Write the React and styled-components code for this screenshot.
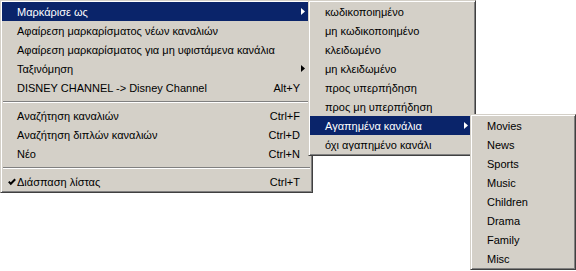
import styled, { createGlobalStyle } from 'styled-components';

const GlobalStyle = createGlobalStyle`
	html, body {
		margin: 0;
		padding: 0;
		background: #ffffff;
	}
	body {
		font-family: 'Liberation Sans', Arial, sans-serif;
		font-size: 11px;
	}
`;

const mainItems = [
	{ label: 'Μαρκάρισε ως', submenu: true, active: true },
	{ label: 'Αφαίρεση μαρκαρίσματος νέων καναλιών' },
	{ label: 'Αφαίρεση μαρκαρίσματος για μη υφιστάμενα κανάλια' },
	{ label: 'Ταξινόμηση', submenu: true },
	{ label: 'DISNEY CHANNEL -> Disney Channel', shortcut: 'Alt+Y' },
	{ separator: true },
	{ label: 'Αναζήτηση καναλιών', shortcut: 'Ctrl+F' },
	{ label: 'Αναζήτηση διπλών καναλιών', shortcut: 'Ctrl+D' },
	{ label: 'Νέο', shortcut: 'Ctrl+N' },
	{ separator: true },
	{ label: 'Διάσπαση λίστας', shortcut: 'Ctrl+T', checked: true },
];

const markItems = [
	{ label: 'κωδικοποιημένο' },
	{ label: 'μη κωδικοποιημένο' },
	{ label: 'κλειδωμένο' },
	{ label: 'μη κλειδωμένο' },
	{ label: 'προς υπερπήδηση' },
	{ label: 'προς μη υπερπήδηση' },
	{ label: 'Αγαπημένα κανάλια', submenu: true, active: true },
	{ label: 'όχι αγαπημένο κανάλι' },
];

const favItems = ['Movies', 'News', 'Sports', 'Music', 'Children', 'Drama', 'Family', 'Misc'].map(
	(label) => ({ label })
);

function Arrow() {
	return (
		<ArrowIcon width="4" height="7" viewBox="0 0 4 7">
			<polygon points="0,0 4,3.5 0,7" fill="currentColor" />
		</ArrowIcon>
	);
}

function Check() {
	return (
		<svg width="8" height="8" viewBox="0 0 8 8">
			<polyline points="0.8,3.6 2.8,5.8 7.2,1.2" fill="none" stroke="currentColor" strokeWidth="2" />
		</svg>
	);
}

function MenuList({ items }) {
	return items.map((item, i) => {
		if (item.separator) {
			return <Separator key={i} />;
		}
		return (
			<Item key={i} $active={item.active}>
				<CheckSlot>{item.checked && <Check />}</CheckSlot>
				<Label>{item.label}</Label>
				{item.shortcut && <Shortcut>{item.shortcut}</Shortcut>}
				{item.submenu && <Arrow />}
			</Item>
		);
	});
}

export default function App() {
	return (
		<Stage>
			<GlobalStyle />
			<Menu $width={313}>
				<MenuList items={mainItems} />
			</Menu>
			<Popup $left={308} $top={0} $width={168}>
				<MenuList items={markItems} />
			</Popup>
			<Popup $left={470} $top={114} $width={106}>
				<MenuList items={favItems} />
			</Popup>
		</Stage>
	);
}

const Stage = styled.div`
	position: relative;
	width: 576px;
	height: 271px;
	overflow: hidden;
`;

const Menu = styled.div`
	box-sizing: border-box;
	width: ${(p) => p.$width}px;
	padding: 1px;
	background: #d4d0c8;
	border: 1px solid;
	border-color: #d4d0c8 #404040 #404040 #d4d0c8;
	box-shadow: inset 1px 1px #ffffff, inset -1px -1px #808080;
	color: #000000;
`;

/* submenus pop out over the parent menu */
const Popup = styled(Menu)`
	position: absolute;
	left: ${(p) => p.$left}px;
	top: ${(p) => p.$top}px;
`;

const Item = styled.div`
	display: flex;
	align-items: center;
	height: 19px;
	line-height: 19px;
	padding: 0 6px;
	white-space: nowrap;
	background: ${(p) => (p.$active ? '#0a246a' : 'transparent')};
	color: ${(p) => (p.$active ? '#ffffff' : '#000000')};
`;

const CheckSlot = styled.span`
	display: flex;
	align-items: center;
	width: 9px;
	height: 8px;
`;

const Label = styled.span`
	flex: 1;
	padding-top: 1px;
`;

const Shortcut = styled.span`
	margin: 0 5px 0 16px;
	padding-top: 1px;
`;

const ArrowIcon = styled.svg`
	flex-shrink: 0;
	margin-left: 8px;
`;

const Separator = styled.div`
	height: 9px;
	display: flex;
	align-items: center;
	padding: 0 1px;

	&::before {
		content: '';
		flex: 1;
		height: 0;
		border-top: 1px solid #808080;
		border-bottom: 1px solid #ffffff;
	}
`;
